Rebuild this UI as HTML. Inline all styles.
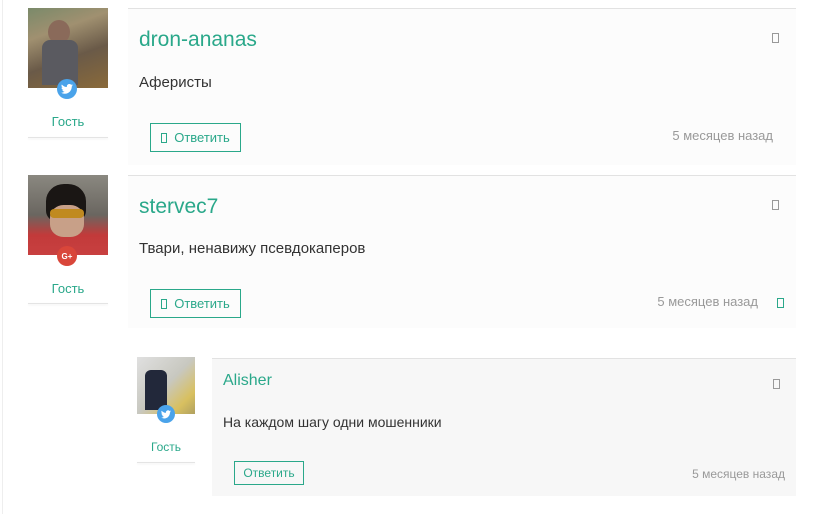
<!DOCTYPE html>
<html><head><meta charset="utf-8"><style>
*{margin:0;padding:0;box-sizing:border-box}
body{width:816px;height:514px;background:#fff;position:relative;overflow:hidden;font-family:"Liberation Sans","DejaVu Sans",sans-serif}
.a{position:absolute}
.g{color:#2aa88a}
.hr{position:absolute;height:1px;background:#e2e2e2}
.ic{position:absolute;width:7px;height:10px;border:1.5px solid #999}
.btn{position:absolute;border:1.5px solid #2aa88a;color:#2aa88a;font-size:13px;display:flex;align-items:center;justify-content:center}
.t{position:absolute;color:#999;font-size:13px;white-space:nowrap}
.badge{position:absolute;border-radius:50%;display:flex;align-items:center;justify-content:center;color:#fff;font-weight:bold}
.ul{position:absolute;height:1px;background:#e4e4e4;box-shadow:0 1px 2px rgba(0,0,0,.08)}
</style></head><body>
<div class="a" style="left:2px;top:0;width:1px;height:514px;background:#eee"></div>

<!-- comment 1 -->
<div class="a" style="left:128px;top:8px;width:668px;height:157px;background:#fcfcfc"></div>
<div class="a" style="left:28px;top:8px;width:80px;height:80px;background:linear-gradient(160deg,#7a8a6a 0%,#a09070 30%,#6a5a48 60%,#8a6a3a 100%)"></div>
<div class="a" style="left:48px;top:20px;width:22px;height:24px;border-radius:50%;background:#8a6a5a"></div>
<div class="a" style="left:42px;top:40px;width:36px;height:45px;background:#5a5a60;border-radius:8px 8px 0 0"></div>
<div class="badge" style="left:57px;top:79px;width:20px;height:20px;background:#4aa3ea"><svg width="12" height="10" viewBox="0 0 24 20"><path d="M24 2.4a9.8 9.8 0 0 1-2.8.8A4.9 4.9 0 0 0 23.3.4a9.9 9.9 0 0 1-3.1 1.2A4.9 4.9 0 0 0 11.8 6 14 14 0 0 1 1.7.9a4.9 4.9 0 0 0 1.5 6.6A4.9 4.9 0 0 1 1 6.9a4.9 4.9 0 0 0 3.9 4.9 4.9 4.9 0 0 1-2.2.1 4.9 4.9 0 0 0 4.6 3.4A9.9 9.9 0 0 1 0 17.3 14 14 0 0 0 7.5 19.5c9.1 0 14-7.5 14-14v-.6A10 10 0 0 0 24 2.4z" fill="#fff"/></svg></div>
<div class="a g" style="left:28px;top:114px;width:80px;text-align:center;font-size:13px">Гость</div>
<div class="ul" style="left:28px;top:137px;width:80px"></div>
<div class="hr" style="left:128px;top:8px;width:668px"></div>
<div class="a g" style="left:139px;top:28px;font-size:21px">dron-ananas</div>
<div class="ic" style="left:772px;top:33px"></div>
<div class="a" style="left:139px;top:74px;font-size:15px;color:#333">Аферисты</div>
<div class="btn" style="left:150px;top:123px;width:91px;height:29px"><span style="display:inline-block;width:6px;height:10px;border:1.5px solid #2aa88a;margin-right:7px"></span>Ответить</div>
<div class="t" style="right:43px;top:128px">5 месяцев назад</div>

<!-- comment 2 -->
<div class="a" style="left:128px;top:175px;width:668px;height:153px;background:#fcfcfc"></div>
<div class="hr" style="left:128px;top:175px;width:668px"></div>
<div class="a" style="left:28px;top:175px;width:80px;height:80px;background:linear-gradient(180deg,#8a8880 0%,#6a6660 50%,#c23a3a 75%,#c84040 100%)"></div>
<div class="a" style="left:46px;top:184px;width:40px;height:38px;border-radius:45% 45% 30% 30%;background:#1a1614"></div>
<div class="a" style="left:50px;top:205px;width:34px;height:32px;border-radius:40%;background:#c8a088"></div>
<div class="a" style="left:50px;top:209px;width:34px;height:9px;background:#c08a20;border-radius:4px"></div>
<div class="badge" style="left:57px;top:246px;width:20px;height:20px;background:#d9463a;font-size:8px">G+</div>
<div class="a g" style="left:28px;top:281px;width:80px;text-align:center;font-size:13px">Гость</div>
<div class="ul" style="left:28px;top:303px;width:80px"></div>
<div class="a g" style="left:139px;top:195px;font-size:21px">stervec7</div>
<div class="ic" style="left:772px;top:200px"></div>
<div class="a" style="left:139px;top:240px;font-size:15px;color:#333">Твари, ненавижу псевдокаперов</div>
<div class="btn" style="left:150px;top:289px;width:91px;height:29px"><span style="display:inline-block;width:6px;height:10px;border:1.5px solid #2aa88a;margin-right:7px"></span>Ответить</div>
<div class="t" style="right:58px;top:294px">5 месяцев назад</div>
<div class="ic" style="left:777px;top:298px;border-color:#2aa88a"></div>

<!-- reply -->
<div class="a" style="left:212px;top:358px;width:584px;height:138px;background:#f7f7f7;border-top:1px solid #e2e2e2"></div>
<div class="a" style="left:137px;top:357px;width:58px;height:57px;background:linear-gradient(135deg,#e0e0e0 0%,#c8c8c0 50%,#d8c060 80%,#b0a060 100%)"></div>
<div class="a" style="left:145px;top:370px;width:22px;height:40px;background:#22283a;border-radius:6px 6px 0 0"></div>
<div class="badge" style="left:157px;top:405px;width:18px;height:18px;background:#4aa3ea"><svg width="10" height="9" viewBox="0 0 24 20"><path d="M24 2.4a9.8 9.8 0 0 1-2.8.8A4.9 4.9 0 0 0 23.3.4a9.9 9.9 0 0 1-3.1 1.2A4.9 4.9 0 0 0 11.8 6 14 14 0 0 1 1.7.9a4.9 4.9 0 0 0 1.5 6.6A4.9 4.9 0 0 1 1 6.9a4.9 4.9 0 0 0 3.9 4.9 4.9 4.9 0 0 1-2.2.1 4.9 4.9 0 0 0 4.6 3.4A9.9 9.9 0 0 1 0 17.3 14 14 0 0 0 7.5 19.5c9.1 0 14-7.5 14-14v-.6A10 10 0 0 0 24 2.4z" fill="#fff"/></svg></div>
<div class="a g" style="left:137px;top:440px;width:58px;text-align:center;font-size:12px">Гость</div>
<div class="ul" style="left:137px;top:462px;width:58px"></div>
<div class="a g" style="left:223px;top:372px;font-size:16px">Alisher</div>
<div class="ic" style="left:773px;top:379px"></div>
<div class="a" style="left:223px;top:414px;font-size:14px;color:#333">На каждом шагу одни мошенники</div>
<div class="btn" style="left:234px;top:461px;width:70px;height:24px;font-size:12px">Ответить</div>
<div class="t" style="right:31px;top:467px;font-size:12px">5 месяцев назад</div>
</body></html>
